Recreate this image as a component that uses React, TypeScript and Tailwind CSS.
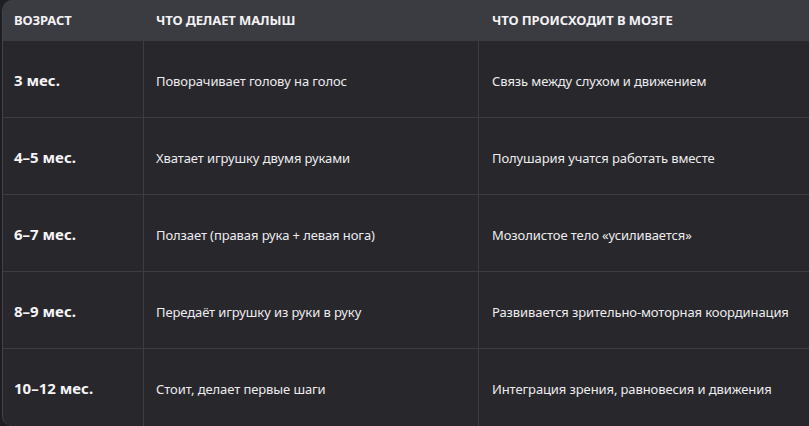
import React from "react";

const rows = [
  ["3 мес.", "Поворачивает голову на голос", "Связь между слухом и движением"],
  ["4–5 мес.", "Хватает игрушку двумя руками", "Полушария учатся работать вместе"],
  ["6–7 мес.", "Ползает (правая рука + левая нога)", "Мозолистое тело «усиливается»"],
  ["8–9 мес.", "Передаёт игрушку из руки в руку", "Развивается зрительно-моторная координация"],
  ["10–12 мес.", "Стоит, делает первые шаги", "Интеграция зрения, равновесия и движения"],
];

export default function App() {
  return (
    <div
      className="w-[809px] h-[426px] overflow-hidden bg-[#1e1e22]"
      style={{ fontFamily: '"Noto Sans", "Open Sans", sans-serif' }}
    >
      <div className="ml-[2px] h-[426px] w-[820px] rounded-l-[10px] border-l border-[#44434a] overflow-hidden bg-[#28272c] text-[#ececee]">
        <div className="flex h-[41px] items-center bg-[#3b3b42] text-[13px] font-bold uppercase tracking-[-0.1px] text-[#f2f2f4]">
          <div className="w-[141px] pl-[11px]">Возраст</div>
          <div className="w-[335px] pl-[12px]">Что делает малыш</div>
          <div className="flex-1 pl-[13px]">Что происходит в мозге</div>
        </div>
        {rows.map((r, i) => (
          <div
            key={i}
            className={`flex h-[77px] items-center ${i < rows.length - 1 ? "border-b border-[#3d3c42]" : ""}`}
          >
            <div className="flex h-full w-[141px] items-center border-r border-[#3d3c42] pl-[11px] pt-[2px] text-[15px] font-bold text-[#f4f4f6]">
              {r[0]}
            </div>
            <div className="flex h-full w-[335px] items-center border-r border-[#3d3c42] pl-[12px] pt-[5px] text-[13px] tracking-[-0.1px]">
              {r[1]}
            </div>
            <div className="flex h-full flex-1 items-center pl-[13px] pt-[5px] text-[13px] tracking-[-0.1px]">
              {r[2]}
            </div>
          </div>
        ))}
      </div>
    </div>
  );
}
